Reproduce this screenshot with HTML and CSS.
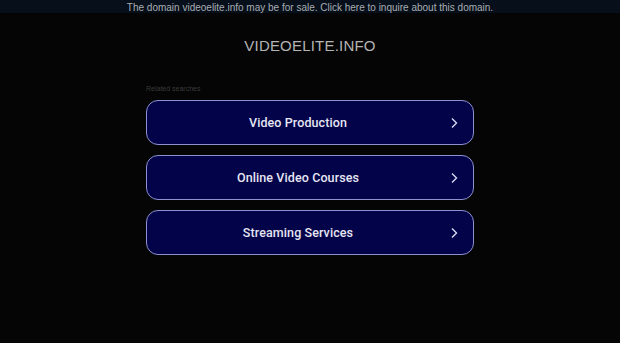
FILE: index.html
```html
<!DOCTYPE html>
<html lang="en">
<head>
    <meta charset="UTF-8">
    <meta name="viewport" content="width=device-width, initial-scale=1.0">
    <title>videoelite.info</title>
    <link rel="stylesheet" href="styles.css">
</head>
<body>
    <div class="sale-bar">
        <a href="#">The domain videoelite.info may be for sale. Click here to inquire about this domain.</a>
    </div>

    <h1 class="domain">VIDEOELITE.INFO</h1>

    <div class="searches">
        <div class="searches-title">Related searches</div>

        <a class="search-btn" href="#">
            <span>Video Production</span>
            <svg class="chevron" viewBox="0 0 8 12" width="8" height="12"><path d="M2 1.5 6.5 6 2 10.5"/></svg>
        </a>
        <a class="search-btn" href="#">
            <span>Online Video Courses</span>
            <svg class="chevron" viewBox="0 0 8 12" width="8" height="12"><path d="M2 1.5 6.5 6 2 10.5"/></svg>
        </a>
        <a class="search-btn" href="#">
            <span>Streaming Services</span>
            <svg class="chevron" viewBox="0 0 8 12" width="8" height="12"><path d="M2 1.5 6.5 6 2 10.5"/></svg>
        </a>
    </div>
</body>
</html>
```

FILE: styles.css
```css
* {
    margin: 0;
    padding: 0;
    box-sizing: border-box;
}

body {
    font-family: 'Liberation Sans', Arial, sans-serif;
    background: #050505;
    min-height: 100vh;
}

.sale-bar {
    height: 13px;
    background: #07101a;
    text-align: center;
    line-height: 12px;
}

.sale-bar a {
    color: #a9adb3;
    font-size: 10px;
    text-decoration: none;
}

.domain {
    text-align: center;
    color: #b4b4b4;
    font-size: 15px;
    font-weight: 400;
    letter-spacing: 0.2px;
    margin-top: 25px;
    line-height: 15px;
}

.searches {
    width: 328px;
    margin: 32px auto 0;
}

.searches-title {
    color: #3a3a3a;
    font-size: 7px;
    margin-bottom: 8px;
}

.search-btn {
    display: flex;
    align-items: center;
    justify-content: center;
    position: relative;
    height: 45px;
    margin-bottom: 10px;
    padding-right: 24px;
    background: #03034a;
    border: 1px solid #8d91cf;
    border-radius: 12px;
    color: #e6e6f2;
    font-family: Roboto, 'Liberation Sans', sans-serif;
    font-size: 12.5px;
    font-weight: 500;
    letter-spacing: 0.1px;
    text-decoration: none;
}

.chevron {
    position: absolute;
    right: 15px;
    top: 16px;
    fill: none;
    stroke: #d8dbf0;
    stroke-width: 1.4;
}
```
